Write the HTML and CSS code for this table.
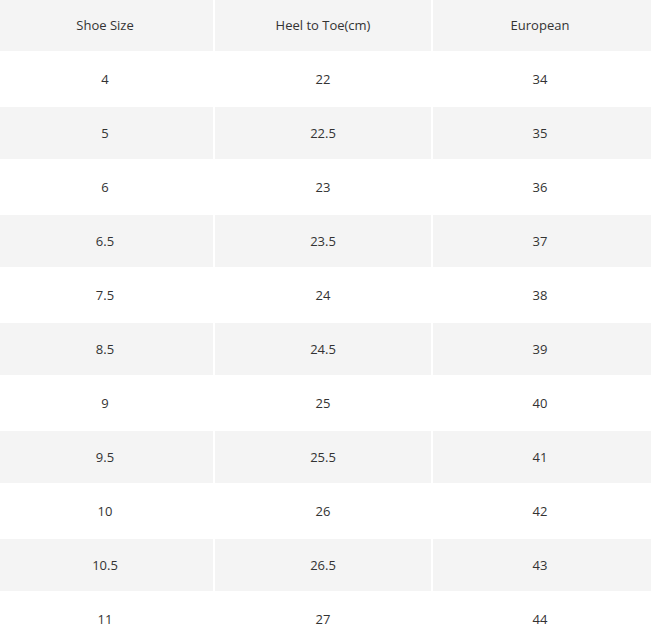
FILE: index.html
```html
<!DOCTYPE html>
<html>
<head>
<meta charset="utf-8">
<link rel="stylesheet" href="styles.css">
</head>
<body>
<table class="size-table">
  <colgroup>
    <col class="c1"><col class="c2"><col class="c3">
  </colgroup>
  <thead>
    <tr class="shade"><th>Shoe Size</th><th>Heel to Toe(cm)</th><th>European</th></tr>
  </thead>
  <tbody>
    <tr><td>4</td><td>22</td><td>34</td></tr>
    <tr class="shade"><td>5</td><td>22.5</td><td>35</td></tr>
    <tr><td>6</td><td>23</td><td>36</td></tr>
    <tr class="shade"><td>6.5</td><td>23.5</td><td>37</td></tr>
    <tr><td>7.5</td><td>24</td><td>38</td></tr>
    <tr class="shade"><td>8.5</td><td>24.5</td><td>39</td></tr>
    <tr><td>9</td><td>25</td><td>40</td></tr>
    <tr class="shade"><td>9.5</td><td>25.5</td><td>41</td></tr>
    <tr><td>10</td><td>26</td><td>42</td></tr>
    <tr class="shade"><td>10.5</td><td>26.5</td><td>43</td></tr>
    <tr><td>11</td><td>27</td><td>44</td></tr>
  </tbody>
</table>
</body>
</html>
```
FILE: styles.css
```css
html {
  overflow: hidden;
  background: #fff;
}
body {
  margin: 0;
  font-family: "Open Sans", "Liberation Sans", sans-serif;
  font-size: 13px;
  color: #333;
}
.size-table {
  border-collapse: separate;
  border-spacing: 2px;
  table-layout: fixed;
  width: 655px;
  margin: -3px 0 0 -2px;
}
.c1 { width: 213px; }
.c2 { width: 216px; }
.c3 { width: 218px; }
.size-table th,
.size-table td {
  height: 52px;
  padding: 0;
  text-align: center;
  vertical-align: middle;
  font-weight: normal;
  box-sizing: border-box;
}
.size-table th:first-child,
.size-table td:first-child {
  padding-right: 3px;
}
.size-table th:last-child,
.size-table td:last-child {
  padding-right: 4px;
}
.shade th,
.shade td {
  background: #f4f4f4;
}
```
